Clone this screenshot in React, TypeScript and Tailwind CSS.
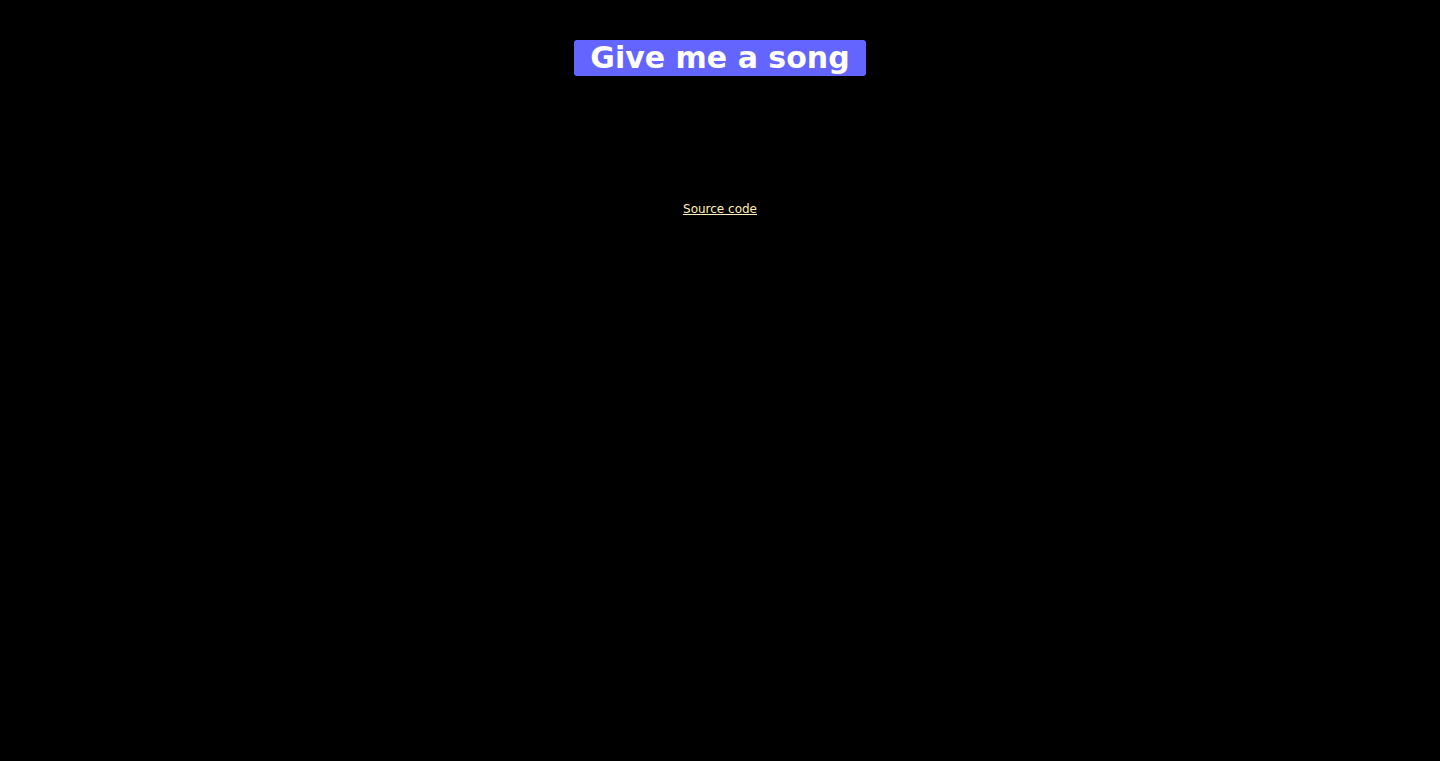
export default function App() {
  return (
    <div className="min-h-[761px] bg-black flex flex-col items-center pt-10 font-['DejaVu_Sans',sans-serif]">
      <button
        type="button"
        className="bg-[#6464ff] text-white font-bold text-[30px] leading-[36px] h-9 px-4 rounded-[3px]"
      >
        Give me a song
      </button>
      <a
        href="#"
        className="mt-[125px] text-[12px] leading-4 text-[#ffeebb] underline"
      >
        Source code
      </a>
    </div>
  );
}
